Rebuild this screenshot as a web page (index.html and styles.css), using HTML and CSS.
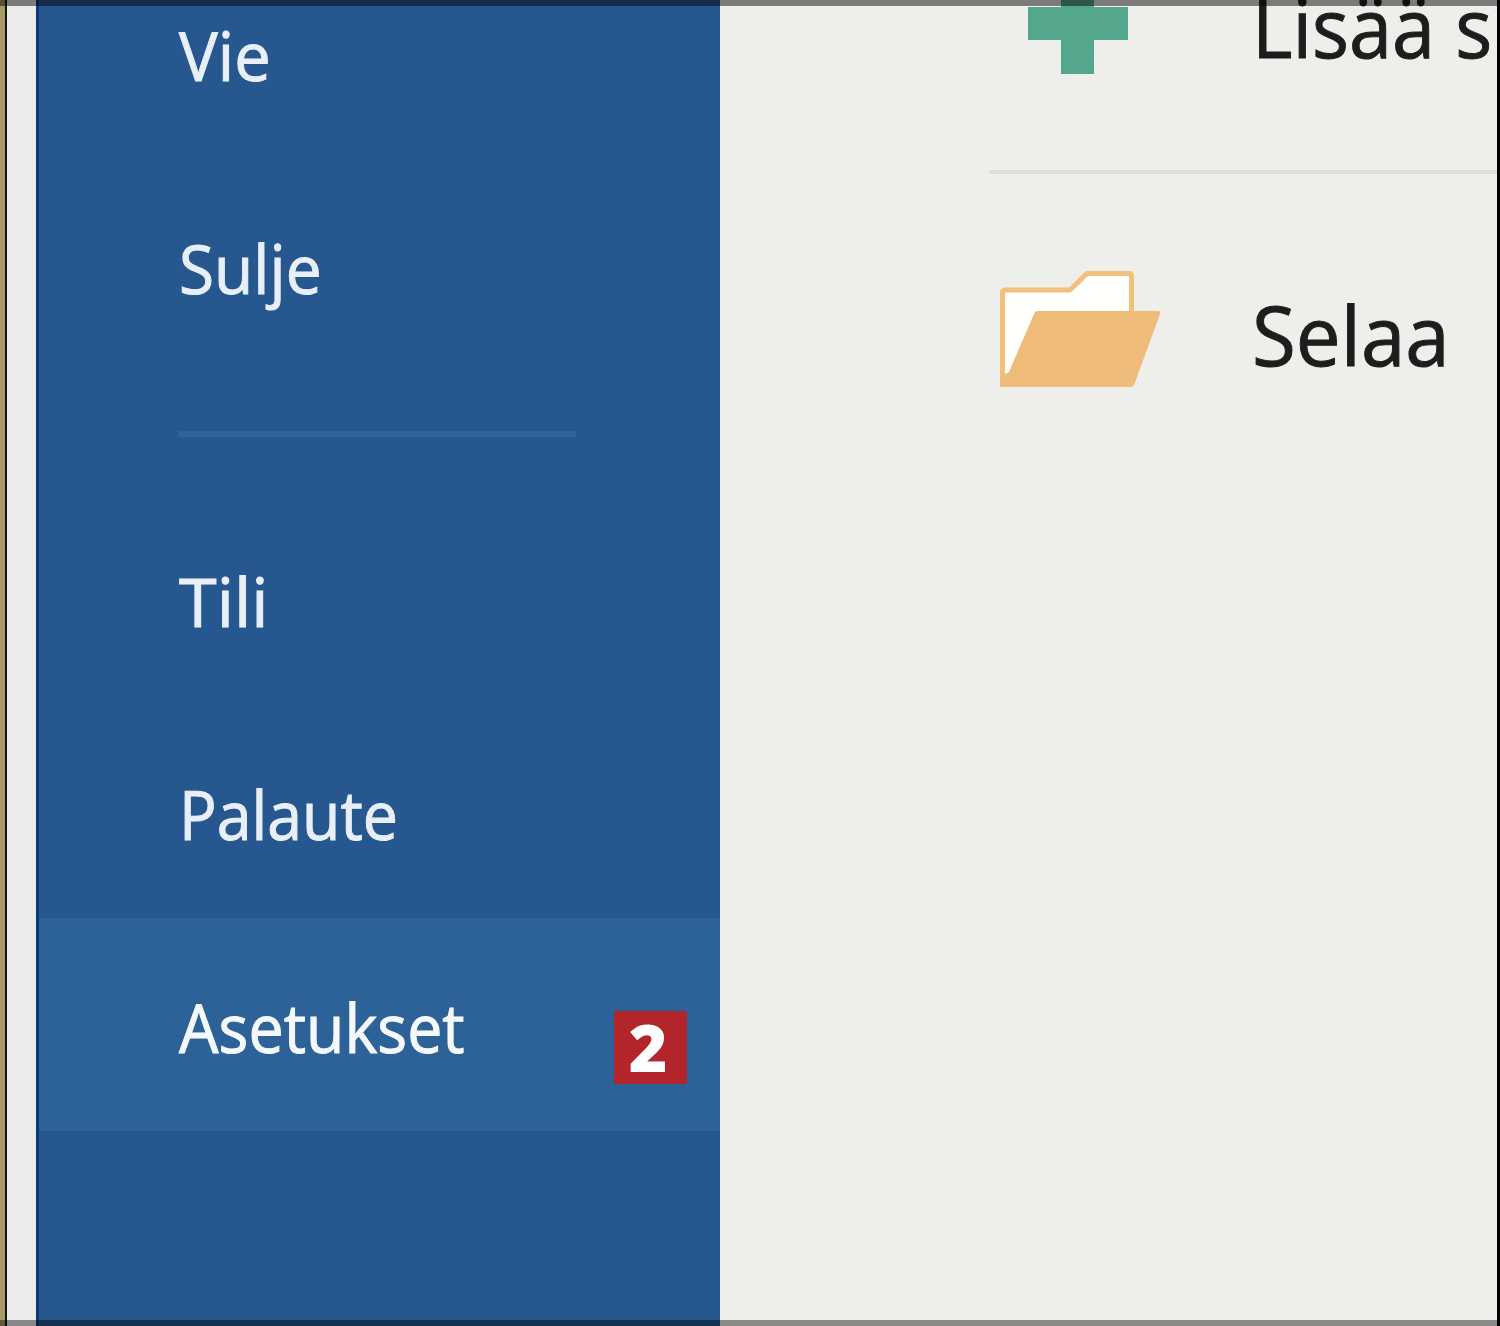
FILE: index.html
```
<!DOCTYPE html>
<html lang="fi">
<head>
  <meta charset="UTF-8">
  <title>Asetukset</title>
  <link rel="stylesheet" href="styles.css">
</head>
<body>

  <div class="window">
    <div class="edge"></div>

    <!-- Valikko -->
    <nav class="sidebar">
      <a class="item"><span class="label vie">Vie</span></a>
      <a class="item"><span class="label sulje">Sulje</span></a>
      <div class="separator"></div>
      <a class="item"><span class="label tili">Tili</span></a>
      <a class="item"><span class="label">Palaute</span></a>
      <a class="item active"><span class="label">Asetukset</span><span class="badge">2</span></a>
    </nav>

    <main class="content">
      <div class="place add">
        <svg class="icon" width="172" height="120" viewBox="0 0 172 120">
          <path fill="#54a78c" d="M72 5h33v34h34v33h-34v34H72V72H39V39h33z"/>
        </svg>
        <span class="place-label add-label">Lisää s</span>
      </div>
      <div class="place browse">
        <svg class="icon" width="172" height="120" viewBox="0 0 172 120">
          <path fill="#fffffb" stroke="#f2c07e" stroke-width="5" stroke-linejoin="round" d="M13.500 115V24q0-3 3-3H81L98 4.500h42q2.500 0 2.500 2.500v40"/>
          <path fill="#efbb79" d="M48 42h121q3 0 2 3l-26 71q-1 2-3 2H11v-10l9-5 25-58q1-3 4-3z"/>
        </svg>
        <span class="place-label">Selaa</span>
      </div>
    </main>
  </div>

</body>
</html>
```
FILE: styles.css
```
body {
  margin: 0;
  font-family: "Open Sans", "Noto Sans", sans-serif;
  background: #eeeeea;
}

.window {
  position: relative;
  display: flex;
  height: 1326px;
  box-sizing: border-box;
  overflow: hidden;
  background: #a79a68;
}

/* tumma kehys ylhäällä ja alhaalla */
.window::after {
  content: "";
  position: absolute;
  top: 0; left: 0;
  width: 100%; height: 100%;
  box-sizing: border-box;
  border-top: 6px solid rgba(0,0,0,0.48);
  border-bottom: 6px solid rgba(0,0,0,0.42);
}

.edge {
  flex: none;
  width: 29px;
  margin-left: 5px;
  border-left: 2px solid #15130b;
  background: #ebebea;
}

.sidebar {
  flex: none;
  width: 681px;
  margin-top: -54px;
  border-left: 3px solid #083a7b;
  background: #26588f;
}

.item {
  display: flex;
  align-items: center;
  height: 213px;
  padding-left: 140px;
  color: #e9eff6;
  font-size: 67px;
  line-height: 92px;
  -webkit-text-stroke: 1px #e9eff6;
}

.active {
  background: #2c6297;
  color: #f6f9fb;
  -webkit-text-stroke-color: #f6f9fb;
}

.label {
  margin-top: 4px;
  transform: scaleX(0.935);
  transform-origin: left;
}

.vie {
  transform: scaleX(0.97);
}

.sulje {
  transform: scaleX(0.955);
}

.tili {
  transform: scaleX(1.02);
}

.separator {
  width: 398px;
  height: 6px;
  margin: 59px 0 55px 139px;
  background: #2d639e;
}

.badge {
  width: 73px;
  height: 73px;
  margin: 46px 33px 0 auto;
  background: #b3252a;
  color: white;
  font-size: 66px;
  font-weight: 800;
  line-height: 71px;
  text-align: center;
  text-indent: -5px;
  -webkit-text-stroke: 0;
}

.content {
  flex: 1;
  min-width: 0;
  padding-left: 269px;
  border-right: 3px solid black;
  background: #eeeeea;
}

.place {
  display: flex;
  align-items: center;
  color: #1c1e1e;
  font-size: 82px;
  white-space: nowrap;
  -webkit-text-stroke: 1px #1c1e1e;
}

.add {
  height: 228px;
  margin-top: -54px;
  border-bottom: 4px solid #dfdfda;
  box-sizing: border-box;
  align-items: flex-start;
}

.add .icon {
  margin: 22px 0 0 0;
}

.browse {
  height: 120px;
  margin-top: 95px;
}

.icon {
  flex: none;
  -webkit-text-stroke: 0;
}

.place-label {
  margin: 9px 0 0 91px;
  line-height: 120px;
  transform: scaleX(0.975);
  transform-origin: left;
}

.add-label {
  margin-top: 20px;
  transform: scaleX(0.945);
}
```
